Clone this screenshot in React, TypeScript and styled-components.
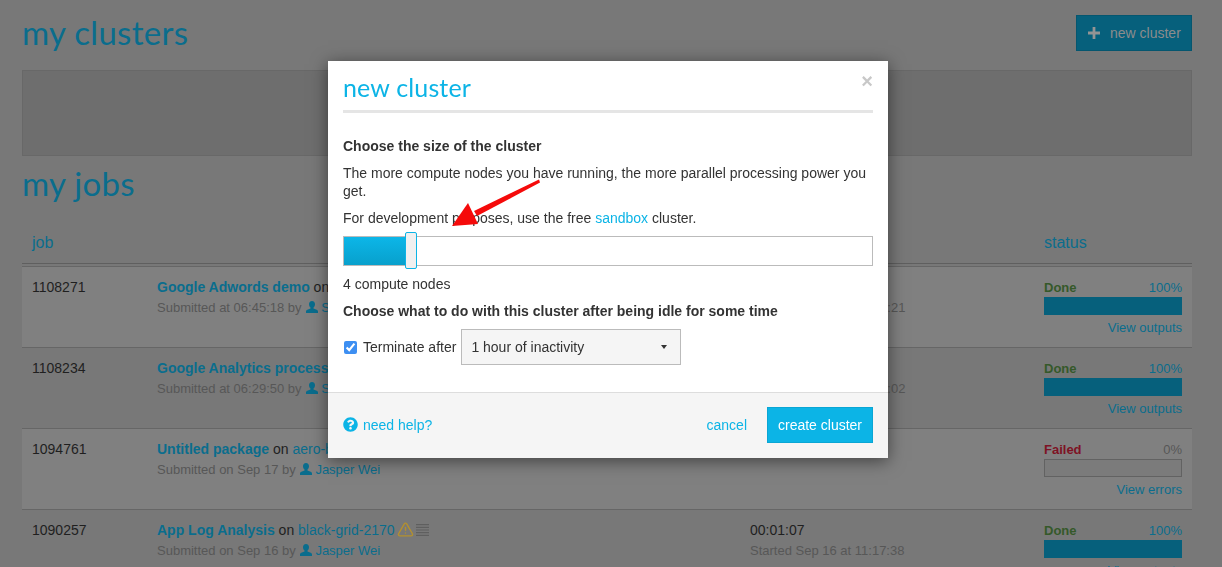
import React from "react";
import styled, { createGlobalStyle } from "styled-components";
import { FaQuestionCircle } from "react-icons/fa";
import { TriangleAlert } from "lucide-react";

// the page behind the dialog is dimmed, these are the colours as they appear
const dim = {
  page: "#787878",
  row: "#808080",
  panel: "#6e6e6e",
  panelLine: "#686868",
  headLine: "#5f5f5f",
  rowLine: "#666666",
  blue: "#0a6d8d",
  fill: "#06607c",
  text: "#1f1f1f",
  muted: "#575757",
  done: "#35592a",
  failed: "#7e1224",
};

const GlobalStyle = createGlobalStyle`
  html, body {
    margin: 0;
    height: 100%;
    overflow: hidden;
    background: ${dim.page};
    color: ${dim.text};
    font: 14px/20px "Liberation Sans", Arial, sans-serif;
  }
`;

const Page = styled.div`
  padding: 15px 30px 0 22px;
  width: 1170px;
`;

const TopBar = styled.div`
  display: flex;
  justify-content: space-between;
  align-items: center;
  height: 36px;
  margin-bottom: 19px;
`;

const Heading = styled.h1`
  margin: 0;
  padding-bottom: 2px;
  font: 400 33px/38px Lato, sans-serif;
  color: ${dim.blue};
  letter-spacing: 0.3px;
`;

const NewButton = styled.button`
  display: flex;
  align-items: center;
  gap: 10px;
  width: 116px;
  height: 36px;
  padding: 0 0 0 11px;
  border: 1px solid #05566f;
  background: ${dim.fill};
  color: #8c8c8c;
  font: 14px "Liberation Sans", Arial, sans-serif;
`;

const ClusterPanel = styled.div`
  height: 84px;
  border: 1px solid ${dim.panelLine};
  background: ${dim.panel};
  margin-bottom: 8px;
`;

const TableHead = styled.div`
  display: grid;
  grid-template-columns: 1012px 138px;
  align-items: end;
  height: 60px;
  padding: 0 10px 10px;
  box-sizing: border-box;
  border-bottom: 1px solid ${dim.headLine};
  color: ${dim.blue};
  font-size: 16px;
`;

const Rows = styled.div`
  margin-top: 2px;
`;

const Row = styled.div<{ $light?: boolean }>`
  display: grid;
  grid-template-columns: 125px 593px 294px 138px;
  height: 81px;
  padding: 10px 10px 0;
  box-sizing: border-box;
  border-top: 1px solid ${dim.rowLine};
  background: ${(p) => (p.$light ? dim.row : "transparent")};
  white-space: nowrap;
`;

const Cell = styled.div`
  min-width: 0;
`;

const Title = styled.a`
  color: ${dim.blue};
  font-weight: 700;
`;

const Link = styled.a`
  color: ${dim.blue};
`;

const Sub = styled.div`
  height: 20px;
  color: ${dim.muted};
  font-size: 13px;
  line-height: 22px;
`;

const StatusTop = styled.div`
  display: flex;
  justify-content: space-between;
  height: 20px;
  font-size: 13px;
  line-height: 22px;
`;

const StatusLabel = styled.strong<{ $failed?: boolean }>`
  color: ${(p) => (p.$failed ? dim.failed : dim.done)};
`;

const Percent = styled.span<{ $muted?: boolean }>`
  color: ${(p) => (p.$muted ? dim.muted : dim.blue)};
`;

const Bar = styled.div<{ $full?: boolean }>`
  height: 18px;
  box-sizing: border-box;
  background: ${(p) => (p.$full ? dim.fill : "#7b7b7b")};
  border: 1px solid ${(p) => (p.$full ? dim.fill : "#626262")};
`;

const StatusLink = styled.div`
  text-align: right;
  color: ${dim.blue};
  font-size: 13px;
  line-height: 22px;
  margin-top: 2px;
`;

const UserGlyph = styled.svg`
  width: 12px;
  height: 12px;
  margin: 0 3px 0 1px;
  fill: ${dim.blue};
  vertical-align: -0.5px;
`;

const ListGlyph = styled.svg`
  width: 13px;
  height: 12px;
  margin-left: 2px;
  fill: #5f5f5f;
  vertical-align: -1px;
`;

const Warn = styled(TriangleAlert)`
  color: #b3902f;
  width: 17px;
  height: 17px;
  margin-left: 2px;
  vertical-align: -3px;
`;

const ModalLayer = styled.div`
  position: fixed;
  inset: 0;
  padding: 61px 0 0 328px;
`;

const Modal = styled.div`
  position: relative;
  width: 560px;
  height: 397px;
  display: flex;
  flex-direction: column;
  background: #fff;
  color: #333;
  box-shadow: 0 3px 16px rgba(0, 0, 0, 0.5);
`;

const ModalHeader = styled.div`
  margin: 0 15px;
  height: 52px;
  box-sizing: border-box;
  border-bottom: 3px solid #e5e5e5;
  display: flex;
  justify-content: space-between;
`;

const ModalTitle = styled.h2`
  margin: 0;
  padding-top: 8px;
  font: 400 25px/36px Lato, sans-serif;
  color: #0cb4e6;
  letter-spacing: 0.15px;
`;

const Close = styled.span`
  margin: 8px 0 0 0;
  font: 700 20px/24px "Liberation Sans", Arial, sans-serif;
  color: #c8c8c8;
`;

const ModalBody = styled.div`
  flex: 1;
  padding: 23px 15px 0;
`;

const Strong = styled.div`
  font-weight: 700;
  color: #333;
`;

const Intro = styled.p`
  margin: 8px 0 0;
  line-height: 18px;
`;

const Para = styled.p`
  margin: 9px 0 0;
  line-height: 18px;
`;

const Sandbox = styled.a`
  color: #0cb4e6;
`;

const Slider = styled.div`
  position: relative;
  height: 30px;
  margin-top: 9px;
  box-sizing: border-box;
  border: 1px solid #bbb;
`;

const SliderFill = styled.div`
  height: 100%;
  background: linear-gradient(#0cb6e8, #08a0cc);
`;

const Thumb = styled.div`
  position: absolute;
  top: -5px;
  width: 12px;
  height: 37px;
  box-sizing: border-box;
  border: 1.5px solid #0cb4e6;
  border-radius: 2px;
  background: #f0f0f0;
`;

const NodeCount = styled.div`
  margin-top: 8px;
`;

const IdleTitle = styled(Strong)`
  margin-top: 7px;
`;

const TerminateRow = styled.label`
  display: flex;
  align-items: center;
  margin-top: 8px;
`;

const Check = styled.input`
  width: 13px;
  height: 13px;
  margin: 1px 6px 0 1px;
  accent-color: #3d8ff2;
`;

const SelectBox = styled.div`
  display: flex;
  justify-content: space-between;
  align-items: center;
  width: 220px;
  height: 36px;
  margin-left: 5px;
  padding: 0 13px 0 9px;
  box-sizing: border-box;
  border: 1px solid #bbb;
  background: #f5f5f5;
`;

const Caret = styled.span`
  border-top: 4px solid #333;
  border-left: 3.5px solid transparent;
  border-right: 3.5px solid transparent;
`;

const ModalFooter = styled.div`
  display: flex;
  align-items: center;
  height: 66px;
  padding: 0 15px 2px;
  box-sizing: border-box;
  border-top: 1px solid #ddd;
  background: #f5f5f5;
`;

const Help = styled.a`
  display: flex;
  align-items: center;
  gap: 5px;
  margin-right: auto;
  color: #0cb4e6;
`;

const Cancel = styled.a`
  color: #0cb4e6;
  margin-right: 20px;
`;

const CreateButton = styled.button`
  width: 106px;
  height: 36px;
  padding: 0;
  border: 1px solid #0aa6d4;
  background: #0cb4e6;
  color: #fff;
  font: 14px "Liberation Sans", Arial, sans-serif;
`;

const Arrow = styled.svg`
  position: absolute;
  left: 0;
  top: 0;
  width: 560px;
  height: 397px;
  pointer-events: none;
`;

const User = () => (
  <UserGlyph viewBox="0 0 12 12">
    <path d="M6 0c1.900 0 3 1.300 3 3.200 0 1.400-.7 2.600-1.500 3.200v1l3.200 1.300c.8.300 1.300.9 1.300 1.700V12H0v-1.600c0-.8.500-1.400 1.300-1.700l3.200-1.300v-1C3.700 5.800 3 4.600 3 3.200 3 1.300 4.100 0 6 0z" />
  </UserGlyph>
);

const List = () => (
  <ListGlyph viewBox="0 0 13 12">
    <path d="M0 0h13v1.200H0zM0 2.700h13v1.200H0zM0 5.400h13v1.200H0zM0 8.100h13v1.200H0zM0 10.800h13V12H0z" />
  </ListGlyph>
);

type Job = {
  id: string;
  name: string;
  cluster?: string;
  submitted: string;
  user: string;
  time?: string;
  started?: string;
  failed?: boolean;
  flagged?: boolean;
};

const jobs: Job[] = [
  { id: "1108271", name: "Google Adwords demo", submitted: "Submitted at 06:45:18", user: "Sam", started: "Started Sep 18 at 06:45:21" },
  { id: "1108234", name: "Google Analytics process", submitted: "Submitted at 06:29:50", user: "Sam", started: "Started Sep 18 at 06:30:02" },
  { id: "1094761", name: "Untitled package", cluster: "aero-bay-1120", submitted: "Submitted on Sep 17", user: "Jasper Wei", failed: true },
  { id: "1090257", name: "App Log Analysis", cluster: "black-grid-2170", submitted: "Submitted on Sep 16", user: "Jasper Wei", time: "00:01:07", started: "Started Sep 16 at 11:17:38", flagged: true },
];

export default function App() {
  const nodes = 4;
  const fillPercent = (nodes / 32) * 100;

  return (
    <>
      <GlobalStyle />
      <Page>
        <TopBar>
          <Heading>my clusters</Heading>
          <NewButton>
            <svg width="12" height="12" viewBox="0 0 13 13" fill="#949494">
              <path d="M5 0h3v5h5v3H8v5H5V8H0V5h5z" />
            </svg>
            new cluster
          </NewButton>
        </TopBar>
        <ClusterPanel />
        <Heading>my jobs</Heading>
        <TableHead>
          <span>job</span>
          <span>status</span>
        </TableHead>
        <Rows>
          {jobs.map((job, i) => (
            <Row key={job.id} $light={i % 2 === 0}>
              <Cell>{job.id}</Cell>
              <Cell>
                <div>
                  <Title>{job.name}</Title> on {job.cluster && <Link>{job.cluster}</Link>}
                  {job.flagged && (
                    <>
                      <Warn />
                      <List />
                    </>
                  )}
                </div>
                <Sub>
                  {job.submitted} by <User />
                  <Link>{job.user}</Link>
                </Sub>
              </Cell>
              <Cell>
                <div>{job.time ?? "\u00a0"}</div>
                {job.started && <Sub>{job.started}</Sub>}
              </Cell>
              <Cell>
                <StatusTop>
                  <StatusLabel $failed={job.failed}>{job.failed ? "Failed" : "Done"}</StatusLabel>
                  <Percent $muted={job.failed}>{job.failed ? "0%" : "100%"}</Percent>
                </StatusTop>
                <Bar $full={!job.failed} />
                <StatusLink>{job.failed ? "View errors" : "View outputs"}</StatusLink>
              </Cell>
            </Row>
          ))}
        </Rows>
      </Page>
      <ModalLayer>
        <Modal>
          <ModalHeader>
            <ModalTitle>new cluster</ModalTitle>
            <Close>×</Close>
          </ModalHeader>
          <ModalBody>
            <Strong>Choose the size of the cluster</Strong>
            <Intro>The more compute nodes you have running, the more parallel processing power you get.</Intro>
            <Para>
              For development purposes, use the free <Sandbox>sandbox</Sandbox> cluster.
            </Para>
            <Slider>
              <SliderFill style={{ width: `${fillPercent}%` }} />
              <Thumb style={{ left: `${fillPercent - 1}%` }} />
            </Slider>
            <NodeCount>{nodes} compute nodes</NodeCount>
            <IdleTitle>Choose what to do with this cluster after being idle for some time</IdleTitle>
            <TerminateRow>
              <Check type="checkbox" defaultChecked />
              Terminate after
              <SelectBox>
                1 hour of inactivity
                <Caret />
              </SelectBox>
            </TerminateRow>
          </ModalBody>
          <ModalFooter>
            <Help>
              <FaQuestionCircle size={15} />
              need help?
            </Help>
            <Cancel>cancel</Cancel>
            <CreateButton>create cluster</CreateButton>
          </ModalFooter>
          {/* red annotation drawn on top of the screenshot */}
          <Arrow viewBox="0 0 560 397">
            <path d="M211 118.500 L146 150 L149 155 L212 121.500 Z" fill="#f50a0a" />
            <path d="M124 165 L140 142 L150 163 Z" fill="#f50a0a" />
          </Arrow>
        </Modal>
      </ModalLayer>
    </>
  );
}
